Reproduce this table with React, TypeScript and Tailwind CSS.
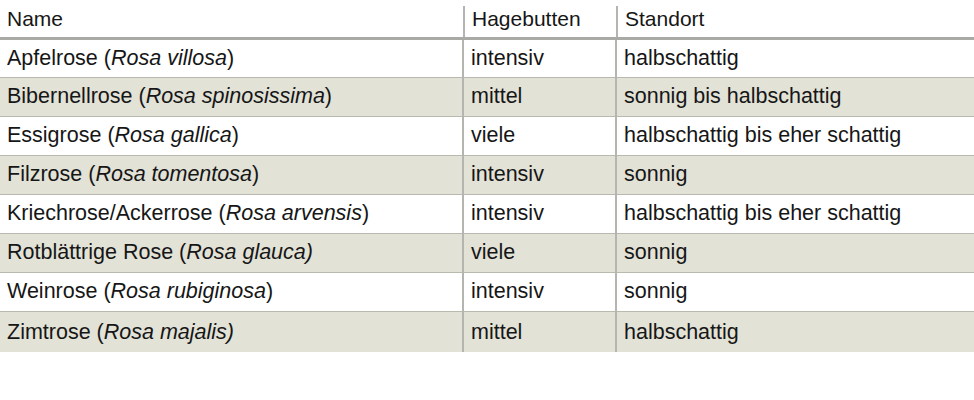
const rows: { name: string; latin: string; hips: string; site: string }[] = [
  { name: 'Apfelrose', latin: 'Rosa villosa', hips: 'intensiv', site: 'halbschattig' },
  { name: 'Bibernellrose', latin: 'Rosa spinosissima', hips: 'mittel', site: 'sonnig bis halbschattig' },
  { name: 'Essigrose', latin: 'Rosa gallica', hips: 'viele', site: 'halbschattig bis eher schattig' },
  { name: 'Filzrose', latin: 'Rosa tomentosa', hips: 'intensiv', site: 'sonnig' },
  { name: 'Kriechrose/Ackerrose', latin: 'Rosa arvensis', hips: 'intensiv', site: 'halbschattig bis eher schattig' },
  { name: 'Rotblättrige Rose', latin: 'Rosa glauca)', hips: 'viele', site: 'sonnig' },
  { name: 'Weinrose', latin: 'Rosa rubiginosa', hips: 'intensiv', site: 'sonnig' },
  { name: 'Zimtrose', latin: 'Rosa majalis)', hips: 'mittel', site: 'halbschattig' },
];

export default function App() {
  return (
    <div className="w-[974px] h-[400px] bg-white text-[#161616] text-[21px]" style={{ fontFamily: '"Liberation Sans", Arial, sans-serif' }}>
      <table className="w-full border-collapse table-fixed">
        <colgroup>
          <col className="w-[463px]" />
          <col className="w-[153px]" />
          <col />
        </colgroup>
        <thead>
          <tr className="h-[38px] border-b-[3px] border-[#a9a9a6]">
            <th className="font-normal text-left align-bottom p-0">
              <div className="h-[31px] pl-[7px] leading-[26px]">Name</div>
            </th>
            <th className="font-normal text-left align-bottom p-0">
              <div className="h-[31px] pl-[7px] leading-[26px] border-l-2 border-[#b4b4b0]">Hagebutten</div>
            </th>
            <th className="font-normal text-left align-bottom p-0">
              <div className="h-[31px] pl-[7px] leading-[26px] border-l-2 border-[#b4b4b0]">Standort</div>
            </th>
          </tr>
        </thead>
        <tbody className="text-[21.5px]">
          {rows.map((r, i) => {
            const closeInside = r.latin.endsWith(')');
            const latin = closeInside ? r.latin.slice(0, -1) : r.latin;
            return (
              <tr key={i} className={`${i === rows.length - 1 ? 'h-[41px]' : 'h-[39px]'} ${i > 0 ? 'border-t border-[#b9b9b0]' : ''} ${i % 2 === 1 ? 'bg-[#e2e2d6]' : 'bg-white'}`}>
                <td className="px-[7px] py-0">
                  {r.name} (<i>{latin}{closeInside ? ')' : ''}</i>{closeInside ? '' : ')'}
                </td>
                <td className="px-[7px] py-0 border-l-2 border-[#b4b4b0]">{r.hips}</td>
                <td className="px-[7px] py-0 border-l-2 border-[#b4b4b0]">{r.site}</td>
              </tr>
            );
          })}
        </tbody>
      </table>
    </div>
  );
}
